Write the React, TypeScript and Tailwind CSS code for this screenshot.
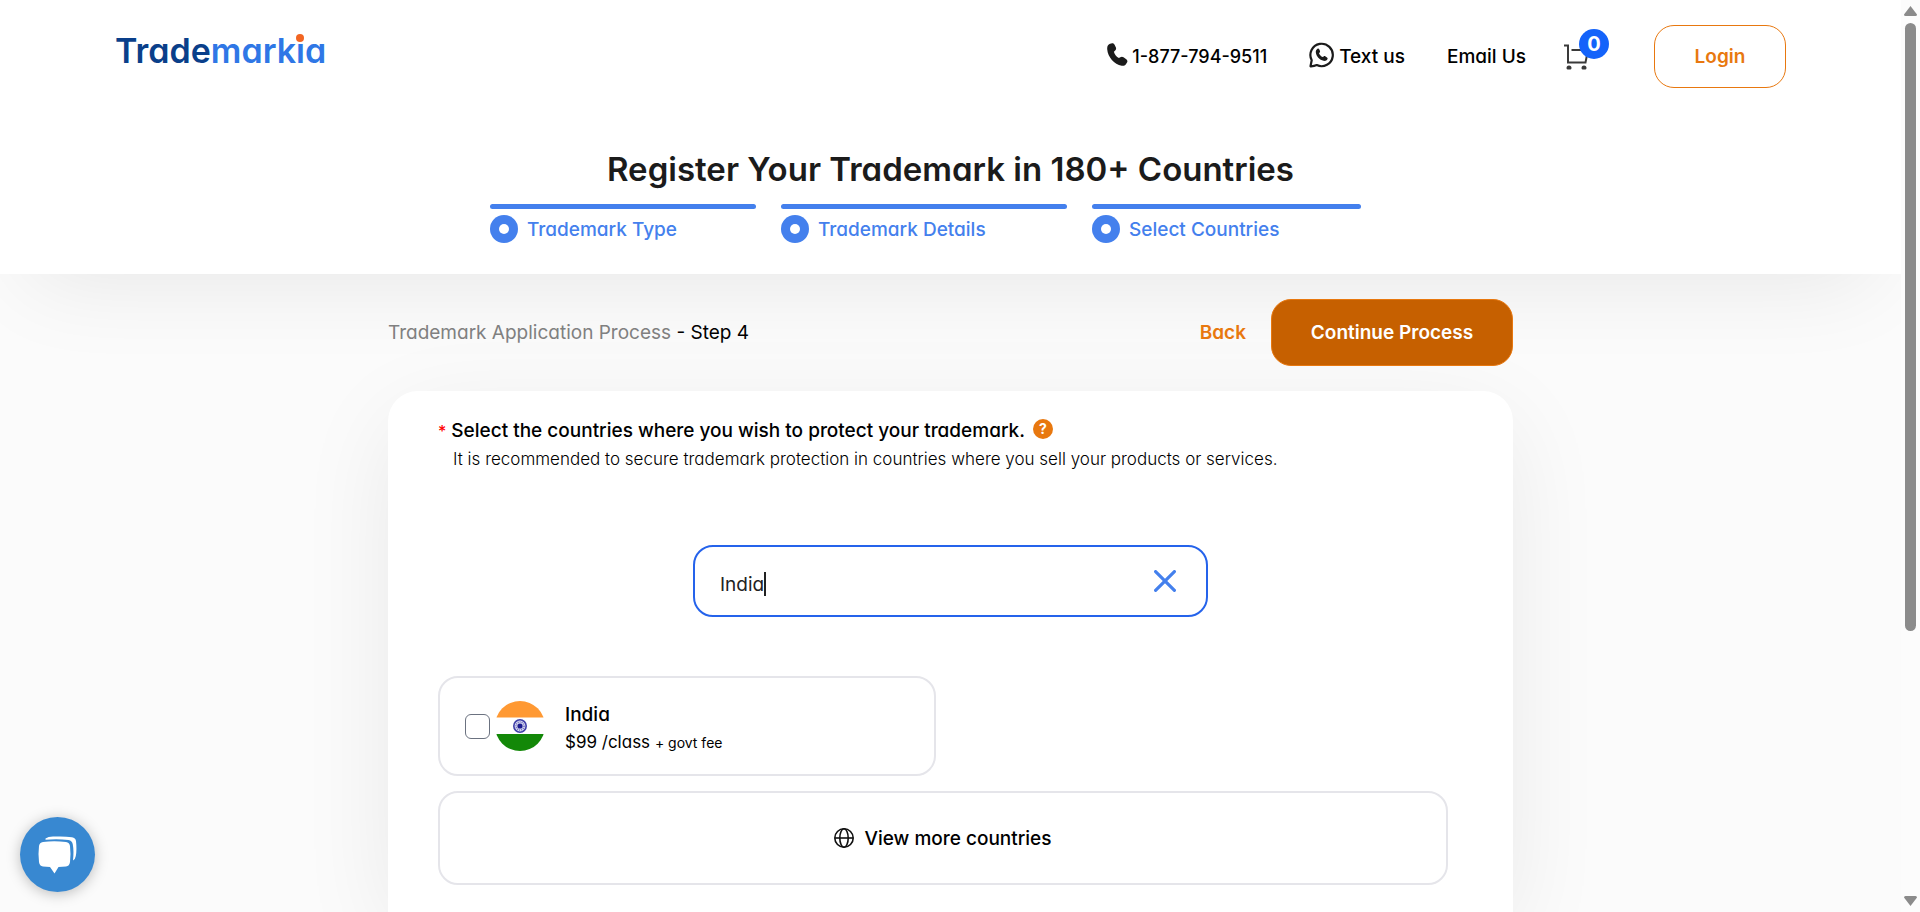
import { useState } from "react";

const steps = ["Trademark Type", "Trademark Details", "Select Countries"];

function Logo() {
  return (
    <a href="/" aria-label="Trademarkia" className="relative block text-[34px] leading-9 font-semibold">
      <span className="text-[#0a3f8a]">Trade</span>
      <span className="text-[#2f77e6]">mark</span>
      <span className="relative text-[#2f77e6]">
        i
        <span className="absolute top-1 left-1/2 size-2 -translate-x-1/2 rounded-full bg-[#f26522] ring-1 ring-white" />
      </span>
      <span className="text-[#2f77e6]">a</span>
    </a>
  );
}

function PhoneIcon() {
  return (
    <svg width="21" height="23" viewBox="0 0 21 23" fill="#1b1b1b" className="mb-1" aria-hidden="true">
      <path d="M4.3.4C5.8-.2 7 .4 7.600 1.700L8.900 4.600C9.400 5.800 9 6.900 8 7.700L6.900 8.700C7.600 11.300 9.500 13.700 11.900 15.100L13.300 14.300C14.300 13.600 15.500 13.600 16.500 14.300L19.300 16.300C20.500 17.200 20.700 18.500 20 19.600L18.900 21.300C17.900 22.600 16.400 23 14.700 22.700C7.200 21.200.8 14.200.2 6.200C0 3.500.9 1.600 3 .8Z" />
    </svg>
  );
}

function WhatsAppIcon() {
  return (
    <svg width="26" height="26" viewBox="0 0 26 26" fill="none" className="mb-1" aria-hidden="true">
      <path
        d="M1.500 24.300L2.700 18.200A11.200 11.200 0 1 1 7.800 23.100Q5 24.400 1.500 24.300Z"
        stroke="#1b1b1b"
        strokeWidth="2.200"
        strokeLinejoin="round"
      />
      <path
        d="M8.500 6.700c.7-.4 1.400-.2 1.700.5l.8 1.800c.2.600.1 1.100-.3 1.500l-.7.700c.7 1.700 2 3 3.700 3.900l1-.7c.5-.4 1-.4 1.500-.1l1.800 1.100c.7.500.8 1.200.4 1.800-.8 1.400-2.100 2-3.800 1.600-4.100-1-7.400-4.600-7.800-8.600-.1-1.500.5-2.800 1.700-3.500Z"
        fill="#1b1b1b"
      />
    </svg>
  );
}

function CartIcon() {
  return (
    <svg width="25" height="26" viewBox="0 0 25 26" fill="none" stroke="#3a3a3a" strokeWidth="2" aria-hidden="true">
      <path d="M0 1.500H4V18.500H21.500L24 6H7.500" />
      <path d="M3.500 25.500Q2.500 25 2.500 24A2.500 2.500 0 1 1 7.500 24Q7.500 25 6.500 25.500Z" fill="#3a3a3a" stroke="none" />
      <path d="M18.500 25.500Q17.500 25 17.500 24A2.500 2.500 0 1 1 22.500 24Q22.500 25 21.500 25.500Z" fill="#3a3a3a" stroke="none" />
    </svg>
  );
}

function Flag() {
  return (
    <svg width="50" height="50" viewBox="0 0 50 50" className="shrink-0" role="img" aria-label="Flag of India">
      <clipPath id="flag-clip">
        <circle cx="25" cy="25" r="25" />
      </clipPath>
      <g clipPath="url(#flag-clip)">
        <rect width="50" height="50" fill="#fff" />
        <rect width="50" height="16.500" fill="#ff9933" />
        <rect y="33" width="50" height="17" fill="#138808" />
      </g>
      <circle cx="25" cy="25" r="6.200" fill="#dcdcf0" stroke="#3f3fa8" strokeWidth="1.600" />
      <circle cx="25" cy="25" r="4" fill="none" stroke="#6f6fc0" strokeWidth="1.600" strokeDasharray="1 1" />
      <circle cx="25" cy="25" r="2.600" fill="#1c1c90" />
    </svg>
  );
}

function GlobeIcon() {
  return (
    <svg width="20" height="20" viewBox="0 0 20 20" fill="none" stroke="#111" strokeWidth="1.600" aria-hidden="true">
      <circle cx="10" cy="10" r="9.200" />
      <ellipse cx="10" cy="10" rx="4.200" ry="9.200" />
      <path d="M1 10H19" />
    </svg>
  );
}

function Header() {
  return (
    <header className="relative bg-white pb-[31px] shadow-[0_36px_90px_-30px_rgba(0,0,0,0.085)]">
      <div className="flex items-center justify-between px-[115px] pt-[25px]">
        <div className="pb-3">
          <Logo />
        </div>
        <nav className="flex items-center text-lg font-medium text-black">
          <a href="tel:18777949511" className="mr-[42px] flex items-center gap-1">
            <PhoneIcon />
            1-877-794-9511
          </a>
          <a href="#text" className="mr-[42px] flex items-center gap-1 text-[19px]">
            <WhatsAppIcon />
            Text us
          </a>
          <a href="#email" className="mr-[38px] text-[19px]">
            Email Us
          </a>
          <a href="#cart" aria-label="Cart" className="relative mr-[65px] block">
            <CartIcon />
            <span className="absolute -top-[15px] left-[15px] flex size-[30px] items-center justify-center rounded-full bg-[#1463fa] text-xl font-bold text-white">
              0
            </span>
          </a>
          <button className="h-[63px] w-[132px] rounded-[20px] border border-[#e8780f] text-[19px] font-semibold text-[#e8780f]">
            Login
          </button>
        </nav>
      </div>
      <h1 className="mt-14 text-center text-[33px] leading-[50px] font-semibold text-[#1b1b1b]">
        Register Your Trademark in 180+ Countries
      </h1>
      <div className="mt-2.5 pr-[50px]">
        <ol className="mx-auto grid w-full max-w-[871px] grid-cols-[266fr_286fr_269fr] gap-[25px]">
          {steps.map((step) => (
            <li key={step}>
              <div className="h-[5px] rounded-full bg-[#4480ed]" />
              <div className="mt-1.5 flex items-center gap-[9px]">
                <span className="flex size-7 items-center justify-center rounded-full bg-[#4480ed]">
                  <span className="size-2.5 rounded-full bg-white" />
                </span>
                <span className="pt-0.5 text-[19px] leading-[26px] font-medium text-[#4480ed]">{step}</span>
              </div>
            </li>
          ))}
        </ol>
      </div>
    </header>
  );
}

function CountryForm() {
  const [query, setQuery] = useState("India");
  return (
    <section className="mt-[25px] flex-1 rounded-t-[30px] bg-white px-[50px] pt-6 shadow-[0_25px_100px_-8px_rgba(0,0,0,0.085)]">
      <label htmlFor="country" className="flex items-center text-[19px] leading-8 font-medium text-black">
        <span className="mr-[5px] text-base leading-8 text-[#ff0000]">*</span>
        Select the countries where you wish to protect your trademark.
        <span className="mb-1 ml-2 flex size-5 items-center justify-center rounded-full bg-[#e8780f] text-sm font-bold text-white">
          ?
        </span>
      </label>
      <p className="pl-[15px] text-[17px] leading-6 font-light text-black">
        It is recommended to secure trademark protection in countries where you sell your products or services.
      </p>

      <div className="mx-auto mt-[74px] flex h-[72px] w-full max-w-[515px] items-center rounded-[20px] border-2 border-[#2563eb] pr-[30px] pl-[25px]">
        <input
          id="country"
          value={query}
          onChange={(e) => setQuery(e.target.value)}
          className="mt-2 [field-sizing:content] text-[19px] text-[#222] caret-transparent outline-none"
        />
        <span className="mt-1.5 h-6 w-0.5 bg-[#222]" />
        <button aria-label="Clear" onClick={() => setQuery("")} className="ml-auto">
          <svg width="22" height="22" viewBox="0 0 22 22" stroke="#4480ed" strokeWidth="3.200" strokeLinecap="round">
            <path d="M1.600 1.600L20.400 20.400M20.400 1.600L1.600 20.400" />
          </svg>
        </button>
      </div>

      <div className="mt-[59px] mr-[15px] grid grid-cols-[498fr_512fr]">
        <label className="flex h-[100px] items-center rounded-[20px] border-2 border-[#e5e5ea] pl-[25px]">
          <input
            type="checkbox"
            className="mr-[5px] size-[25px] appearance-none rounded-md border border-[#6b7280] checked:bg-[#4480ed]"
          />
          <Flag />
          <span className="ml-5 pt-1 text-black">
            <span className="block text-[19px] leading-7 font-medium">India</span>
            <span className="block text-[17px] leading-[26px]">
              $99 /class <span className="text-sm">+ govt fee</span>
            </span>
          </span>
        </label>
        <button className="col-span-2 mt-[15px] flex h-[94px] items-center justify-center gap-2.5 rounded-[20px] border-2 border-[#e5e5ea] text-[19px] font-medium text-black">
          <GlobeIcon />
          <span className="pt-0.5">View more countries</span>
        </button>
      </div>
    </section>
  );
}

function ScrollBar() {
  return (
    <div aria-hidden="true" className="flex w-[19px] shrink-0 flex-col items-center bg-[#fcfcfc] py-1.5">
      <svg width="13" height="10" viewBox="0 0 13 10" fill="#8b8b8b">
        <path d="M6.500 0L13 8.500Q13 10 11.500 10H1.500Q0 10 0 8.500Z" />
      </svg>
      <div className="mt-[7px] h-[67.6%] w-[11px] rounded-full bg-[#8b8b8b]" />
      <svg width="13" height="10" viewBox="0 0 13 10" fill="#8b8b8b" className="mt-auto">
        <path d="M6.500 10L13 1.500Q13 0 11.500 0H1.500Q0 0 0 1.500Z" />
      </svg>
    </div>
  );
}

export default function App() {
  return (
    <div className="flex h-screen bg-[#fbfbfb] font-['Inter',sans-serif] [font-feature-settings:'cv11','ss03']">
      <div className="flex min-w-0 flex-1 flex-col overflow-hidden">
        <Header />
        <main className="mx-auto flex w-full max-w-[1125px] flex-1 flex-col pt-[25px]">
          <div className="relative flex items-center text-[19px]">
            <p className="pt-0.5 text-black">
              <span className="text-[#808080]">Trademark Application Process</span> <span>- Step 4</span>
            </p>
            <button className="mr-[25px] ml-auto pt-0.5 font-semibold text-[#e8780f]">Back</button>
            <button className="h-[67px] w-[242px] rounded-[20px] border border-[#e8780f] bg-[#c66000] pt-0.5 font-semibold text-white">
              Continue Process
            </button>
          </div>
          <CountryForm />
        </main>
      </div>
      <ScrollBar />
      <button
        aria-label="Open chat"
        className="fixed bottom-5 left-5 flex size-[75px] items-center justify-center rounded-full bg-[#3888d1] shadow-[0_2px_14px_rgba(0,0,0,0.25)]"
      >
        <svg width="39" height="38" viewBox="0 0 39 38" fill="#fff" aria-hidden="true">
          <path d="M5 6Q16 4.500 28 6Q31.500 6.500 32 10Q33 18 32 26Q31.500 30 28 30.500L20.500 31L16.500 37.500L12 31L5 30.500Q1.500 30 1 26Q0 18 1 10Q1.500 6.500 5 6Z" />
          <path d="M7.500 2.500Q10 .8 15 .6Q26 0 34 1.200Q37.500 1.800 38 5Q39 14 37.800 20Q37.200 23.500 35 24.500Q36 15 34.800 8.500Q34.200 4.500 30.500 3.900Q18 2.500 7.500 3.800Z" />
        </svg>
      </button>
    </div>
  );
}
